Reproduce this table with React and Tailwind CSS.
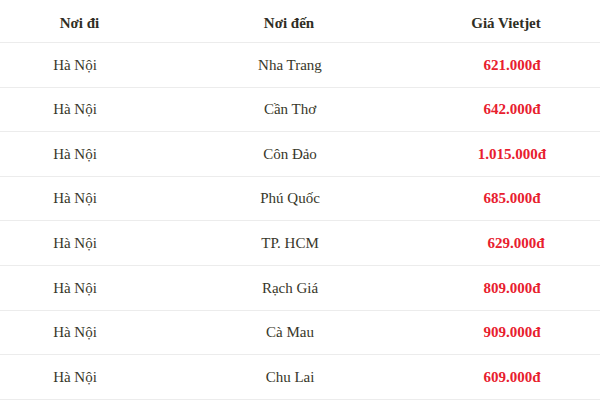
export default function App() {
  const rows = [
    ["Hà Nội", "Nha Trang", "621.000đ", ""],
    ["Hà Nội", "Cần Thơ", "642.000đ", ""],
    ["Hà Nội", "Côn Đảo", "1.015.000đ", ""],
    ["Hà Nội", "Phú Quốc", "685.000đ", ""],
    ["Hà Nội", "TP. HCM", "629.000đ", "pl-[8px]"],
    ["Hà Nội", "Rạch Giá", "809.000đ", ""],
    ["Hà Nội", "Cà Mau", "909.000đ", ""],
    ["Hà Nội", "Chu Lai", "609.000đ", ""],
  ];
  return (
    <div
      className="w-[600px] h-[400px] bg-white overflow-hidden text-[15px] text-[#38372a]"
      style={{ fontFamily: '"Liberation Serif", "Times New Roman", serif' }}
    >
      <div className="grid grid-cols-[159px_260px_1fr] h-[43px] pt-[4px] items-center border-b border-[#ececec] font-bold text-[#2f2e24]">
        <div className="text-center">Nơi đi</div>
        <div className="text-center">Nơi đến</div>
        <div className="text-center pr-[7px]">Giá Vietjet</div>
      </div>
      {rows.map((r, i) => (
        <div
          key={i}
          className="grid grid-cols-[150px_280px_1fr] h-[44.6px] items-center border-b border-[#ececec]"
        >
          <div className="text-center">{r[0]}</div>
          <div className="text-center">{r[1]}</div>
          <div className="pr-[6px]">
            <div className={"text-center font-bold text-[#e8202e] " + r[3]}>{r[2]}</div>
          </div>
        </div>
      ))}
    </div>
  );
}
